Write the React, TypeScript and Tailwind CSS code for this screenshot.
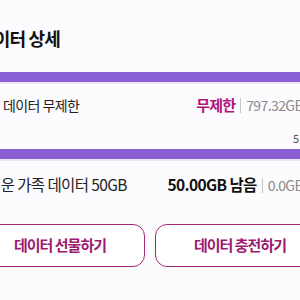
import React from 'react';

const font = { fontFamily: '"Noto Sans CJK KR", "Noto Sans", sans-serif' };

function UsageBar() {
  return (
    <div className="h-[12px] w-full border-b-2 border-[#ece6f6] bg-[#8a5fd3]"></div>
  );
}

function UsageRow({ label, labelClass, value, valueClass, total }) {
  return (
    <div className="flex items-center justify-between h-[20px]">
      <span className={`tracking-[-0.6px] text-[#222] ${labelClass}`}>{label}</span>
      <div className="flex items-center gap-[5px] whitespace-nowrap">
        <span className={`font-bold ${valueClass}`}>{value}</span>
        <span className="h-[15px] w-px bg-[#c8c8c8]"></span>
        <span className="text-[14px] tracking-[-0.6px] text-[#8a8a8a]">{total}</span>
      </div>
    </div>
  );
}

export default function App() {
  return (
    <div className="h-[300px] w-[300px] overflow-hidden bg-[#fcfbfd]" style={font}>
      <div className="ml-[-25px] w-[350px]">
        <h1 className="ml-[3px] pt-[25px] h-[72px] text-[18px] leading-[26px] font-bold tracking-[-0.8px] text-[#111]">
          데이터 상세
        </h1>
        <UsageBar />
        <div className="pl-[28px] pr-[22px] pt-[11px]">
          <UsageRow
            label="데이터 무제한"
            labelClass="text-[14px]"
            value="무제한"
            valueClass="text-[15px] tracking-[-0.8px] text-[#b0157a]"
            total="797.32GB"
          />
          <div className="mt-[16px] flex justify-end text-[11px] leading-[14px] text-[#555]">
            <span className="mr-[4px]">5</span>
          </div>
        </div>
        <div className="mt-[4px]">
          <UsageBar />
        </div>
        <div className="pl-[12px] pr-[22px] pt-[14px]">
          <UsageRow
            label="쉬운 가족 데이터 50GB"
            labelClass="text-[15.5px]"
            value="50.00GB 남음"
            valueClass="text-[15.5px] tracking-[-0.6px] text-[#111]"
            total="0.0GB"
          />
        </div>
        <div className="mt-[29px] grid grid-cols-2 gap-[10px]">
          <button className="h-[43px] rounded-[12px] border-[1.5px] border-[#a3287a] bg-white text-[15px] font-bold tracking-[-1px] text-[#9c1a70]">
            데이터 선물하기
          </button>
          <button className="h-[43px] rounded-[12px] border-[1.5px] border-[#a3287a] bg-white text-[15px] font-bold tracking-[-1px] text-[#9c1a70]">
            데이터 충전하기
          </button>
        </div>
      </div>
    </div>
  );
}
